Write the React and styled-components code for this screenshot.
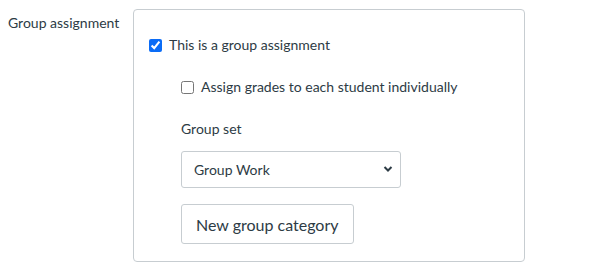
import React, { useState } from "react";
import styled, { createGlobalStyle } from "styled-components";

const GlobalStyle = createGlobalStyle`
  body {
    margin: 0;
    background: #fff;
    font-family: Lato, "Open Sans", sans-serif;
    color: #2d3b45;
  }
`;

const Row = styled.div`
  display: flex;
  align-items: flex-start;
  padding: 9px 0 0 8px;
`;

const Label = styled.div`
  width: 125px;
  font-size: 14px;
  line-height: 18px;
  padding-top: 5px;
`;

const Box = styled.div`
  box-sizing: border-box;
  width: 392px;
  height: 253px;
  border: 1px solid #c7cdd1;
  border-radius: 4px;
  padding: 25px 0 0 15px;
`;

const Check = styled.label`
  display: flex;
  align-items: center;
  gap: 7px;
  font-size: 14px;
  line-height: 20px;
  cursor: pointer;
  margin-bottom: ${(p) => p.bottom || "0"};

  input {
    width: 13px;
    height: 13px;
    margin: 0;
    accent-color: #0b6cf6;
  }
`;

const Sub = styled.div`
  margin-left: 32px;
  display: flex;
  flex-direction: column;
  align-items: flex-start;
`;

const FieldLabel = styled.div`
  font-size: 14px;
  line-height: 20px;
  margin-bottom: 12px;
`;

const SelectWrap = styled.div`
  position: relative;
  width: 220px;
  height: 37px;
  margin-bottom: 16px;
`;

const Select = styled.select`
  appearance: none;
  box-sizing: border-box;
  width: 100%;
  height: 100%;
  border: 1px solid #c7cdd1;
  border-radius: 3px;
  background: #fff;
  font-family: Lato, sans-serif;
  font-size: 14px;
  color: #2d3b45;
  padding: 0 12px;
`;

const Chevron = styled.svg`
  position: absolute;
  right: 8px;
  top: 14px;
  pointer-events: none;
`;

const Button = styled.button`
  box-sizing: border-box;
  height: 40px;
  padding: 0 14px;
  border: 1px solid #c7cdd1;
  border-radius: 3px;
  background: #fff;
  font-family: Lato, sans-serif;
  font-size: 16px;
  color: #2d3b45;
`;

export default function App() {
  const [group, setGroup] = useState(true);
  const [individual, setIndividual] = useState(false);

  return (
    <>
      <GlobalStyle />
      <Row>
        <Label>Group assignment</Label>
        <Box>
          <Check bottom="22px">
            <input
              type="checkbox"
              checked={group}
              onChange={(e) => setGroup(e.target.checked)}
            />
            This is a group assignment
          </Check>
          <Sub>
            <Check bottom="22px">
              <input
                type="checkbox"
                checked={individual}
                onChange={(e) => setIndividual(e.target.checked)}
              />
              Assign grades to each student individually
            </Check>
            <FieldLabel>Group set</FieldLabel>
            <SelectWrap>
              <Select defaultValue="work">
                <option value="work">Group Work</option>
              </Select>
              <Chevron width="10" height="8" viewBox="0 0 10 8">
                <path d="M1.5 2l3.5 3.5L8.5 2" fill="none" stroke="#2d3b45" strokeWidth="2" />
              </Chevron>
            </SelectWrap>
            <Button>New group category</Button>
          </Sub>
        </Box>
      </Row>
    </>
  );
}
